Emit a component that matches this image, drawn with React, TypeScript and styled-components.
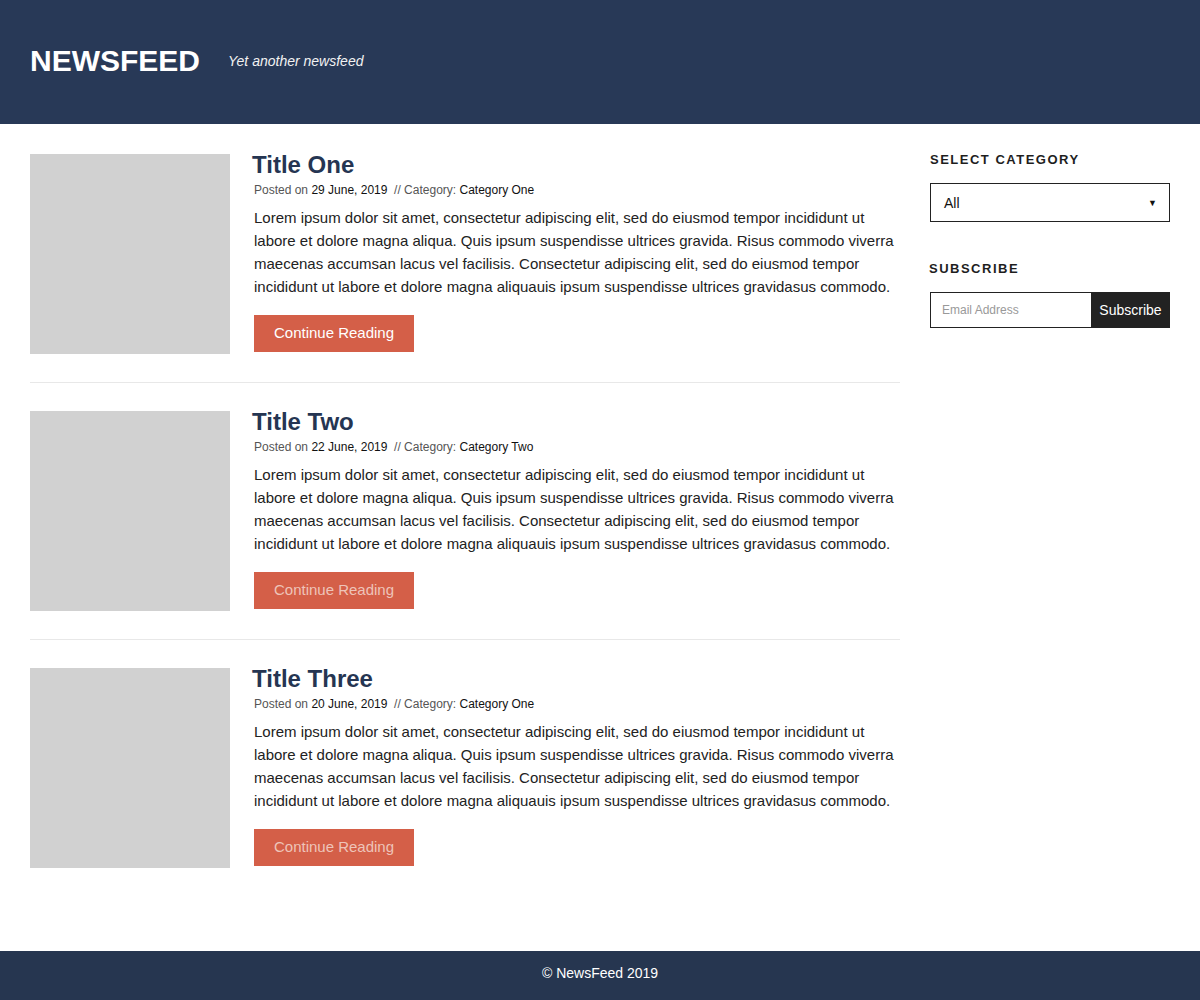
import React from "react";
import styled, { createGlobalStyle } from "styled-components";

const Global = createGlobalStyle`
  html, body { margin: 0; padding: 0; background: #fff; }
  body { font-family: "Liberation Sans", Arial, sans-serif; }
  * { box-sizing: border-box; }
`;

const Header = styled.header`
  background: #283957;
  height: 124px;
  display: flex;
  align-items: center;
  padding: 0 30px 2px;
  gap: 28px;
`;

const Logo = styled.h1`
  margin: 0;
  color: #fff;
  font-size: 30px;
  font-weight: 700;
`;

const Tagline = styled.span`
  color: #f2f2f2;
  font-size: 14px;
  font-style: italic;
`;

const Body = styled.div`
  display: flex;
  gap: 30px;
  padding: 30px 30px 83px;
`;

const Main = styled.main`
  width: 870px;
  display: flex;
  flex-direction: column;
`;

const Article = styled.article`
  display: flex;
  gap: 24px;
  padding: 28px 0;
  border-bottom: 1px solid #e8e8e8;
  &:first-child { padding-top: 0; }
  &:last-child { border-bottom: none; padding-bottom: 0; }
`;

const Thumb = styled.div`
  width: 200px;
  height: 200px;
  flex: 0 0 200px;
  background: #d1d1d1;
`;

const Content = styled.div`
  flex: 1;
  display: flex;
  flex-direction: column;
  align-items: flex-start;
`;

const Title = styled.h2`
  margin: -4px 0 0 -2px;
  font-size: 24px;
  line-height: 30px;
  font-weight: 700;
  color: #253552;
`;

const Meta = styled.div`
  margin-top: 3px;
  font-size: 12px;
  line-height: 14px;
  color: #555;
`;

const MetaValue = styled.span`
  color: #111;
`;

const Para = styled.p`
  margin: 9px 0 0;
  font-size: 15px;
  line-height: 23px;
  color: #222;
`;

const ReadButton = styled.button<{ $dim?: boolean }>`
  margin-top: 17px;
  width: 160px;
  height: 37px;
  border: none;
  background: #d45f48;
  color: ${(p) => (p.$dim ? "#eec4b9" : "#ffffff")};
  font-family: "Liberation Sans", Arial, sans-serif;
  font-size: 15px;
  padding: 0 0 2px;
  cursor: pointer;
`;

const Sidebar = styled.aside`
  width: 240px;
  display: flex;
  flex-direction: column;
`;

const SideHeading = styled.h3<{ $shift?: number }>`
  margin: 0 0 0 ${(p) => p.$shift ?? 0}px;
  font-size: 13px;
  line-height: 16px;
  font-weight: 700;
  letter-spacing: 1.5px;
  color: #1e1e1e;
  text-transform: uppercase;
`;

const TopHeading = styled(SideHeading)`
  margin-top: -2px;
`;

const SelectBox = styled.div`
  margin-top: 15px;
  height: 39px;
  border: 1px solid #222;
  display: flex;
  align-items: center;
  justify-content: space-between;
  padding: 0 12px 0 13px;
  font-size: 14px;
  color: #111;
`;

const Arrow = styled.span`
  font-size: 9px;
  color: #111;
`;

const Section = styled.div`
  margin-top: 39px;
  display: flex;
  flex-direction: column;
`;

const SubscribeRow = styled.div`
  margin-top: 15px;
  display: flex;
  height: 36px;
`;

const EmailInput = styled.input`
  flex: 1;
  min-width: 0;
  border: 1px solid #222;
  border-right: none;
  padding: 0 11px;
  font-family: "Liberation Sans", Arial, sans-serif;
  font-size: 12px;
  outline: none;
  &::placeholder { color: #999; }
`;

const SubscribeButton = styled.button`
  width: 79px;
  border: none;
  background: #222;
  color: #fff;
  font-family: "Liberation Sans", Arial, sans-serif;
  font-size: 14px;
  padding: 0;
`;

const Footer = styled.footer`
  background: #263650;
  height: 49px;
  display: flex;
  align-items: center;
  justify-content: center;
  padding-bottom: 5px;
  color: #fff;
  font-size: 14px;
`;

const lorem =
  "Lorem ipsum dolor sit amet, consectetur adipiscing elit, sed do eiusmod tempor incididunt ut labore et dolore magna aliqua. Quis ipsum suspendisse ultrices gravida. Risus commodo viverra maecenas accumsan lacus vel facilisis. Consectetur adipiscing elit, sed do eiusmod tempor incididunt ut labore et dolore magna aliquauis ipsum suspendisse ultrices gravidasus commodo.";

const posts = [
  { title: "Title One", date: "29 June, 2019", cat: "Category One", dim: false },
  { title: "Title Two", date: "22 June, 2019", cat: "Category Two", dim: true },
  { title: "Title Three", date: "20 June, 2019", cat: "Category One", dim: true },
];

export default function App() {
  return (
    <>
      <Global />
      <Header>
        <Logo>NEWSFEED</Logo>
        <Tagline>Yet another newsfeed</Tagline>
      </Header>
      <Body>
        <Main>
          {posts.map((p) => (
            <Article key={p.title}>
              <Thumb />
              <Content>
                <Title>{p.title}</Title>
                <Meta>
                  Posted on <MetaValue>{p.date}</MetaValue>&nbsp; // Category:{" "}
                  <MetaValue>{p.cat}</MetaValue>
                </Meta>
                <Para>{lorem}</Para>
                <ReadButton $dim={p.dim}>Continue Reading</ReadButton>
              </Content>
            </Article>
          ))}
        </Main>
        <Sidebar>
          <TopHeading>Select Category</TopHeading>
          <SelectBox>
            <span>All</span>
            <Arrow>▼</Arrow>
          </SelectBox>
          <Section>
            <SideHeading $shift={-1}>Subscribe</SideHeading>
            <SubscribeRow>
              <EmailInput placeholder="Email Address" />
              <SubscribeButton>Subscribe</SubscribeButton>
            </SubscribeRow>
          </Section>
        </Sidebar>
      </Body>
      <Footer>© NewsFeed 2019</Footer>
    </>
  );
}
